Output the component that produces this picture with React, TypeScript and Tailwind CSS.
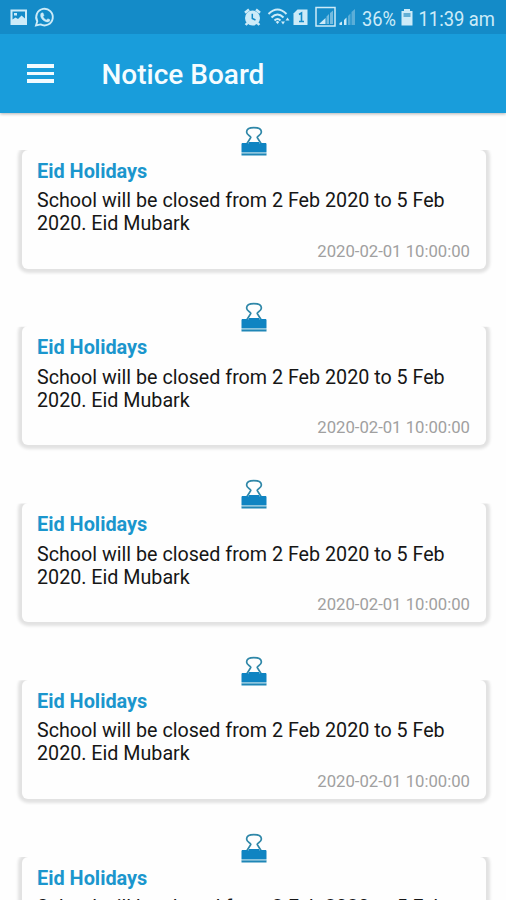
import React from "react";

const notices = [0, 1, 2, 3, 4].map((id) => ({
  id,
  title: "Eid Holidays",
  lines: ["School will be closed from 2 Feb 2020 to 5 Feb", "2020. Eid Mubark"],
  date: "2020-02-01 10:00:00",
}));

function BinderClip() {
  return (
    <svg width="26" height="31" viewBox="0 0 26 31" className="block" fill="none">
      <path
        d="M6 17.500L9.800 11.500C10 9.800 5.600 9.500 5.600 6C5.600 3 8 1.700 13 1.700S20.400 3 20.400 6C20.400 9.500 16 9.800 16.200 11.500L20 17.500"
        stroke="#2f87a8"
        strokeWidth="1.700"
      />
      <path d="M1 17H6.500L7.500 18H18.500L19.500 17H25L25.500 18V26H.5V18Z" fill="#0f84c2" />
      <path d="M8 16H18L19 18H7Z" fill="#0f84c2" />
      <path d="M.5 27.300H25.500V29.500H.5Z" fill="#1f86b6" />
      <path d="M.5 26H25.500V27.300H.5Z" fill="#8cc5de" />
    </svg>
  );
}

function StatusBar() {
  return (
    <div className="flex h-[34px] items-center bg-[#148bc8] text-[#cdebf8]">
      <svg width="506" height="34" viewBox="0 0 506 34" fill="none">
        <path fillRule="evenodd" d="M10.500 9.500H27V25H10.500ZM12.500 11.500V19.500L15.500 17.500L18 19L21.500 15.500L25 18.500V11.500ZM14 13H17V15.500H14Z" fill="#cdebf8" />
        <g stroke="#cdebf8">
          <path d="M36 25.500L37.300 21.200A8.300 8.300 0 1 1 40.600 24.400Z" strokeWidth="1.900" />
          <path d="M41 13.200L43 12.800L44 15.500L43 16.700C43.700 18.300 45 19.400 46.500 20L47.800 18.700L50 19.800C50 21.500 48.500 22.200 46.800 21.900C43 21.300 39.300 17 41 13.200Z" fill="#cdebf8" strokeWidth=".4" />
        </g>
        <circle cx="252.500" cy="18" r="7.500" fill="#cdebf8" />
        <path d="M245 12.700L249 9.500M256 9.500L260 12.700M247.500 23L245.700 25M257.500 23L259.300 25" stroke="#cdebf8" strokeWidth="2.600" />
        <path d="M252.300 13.800V18.500L255.500 20" stroke="#148bc8" strokeWidth="1.500" />
        <g stroke="#cdebf8" strokeWidth="2">
          <path d="M268.500 14Q277.500 5 286.500 14M271.500 17.500Q277.500 11.500 283.500 17.500M274.500 20.500Q277.500 17.500 280.500 20.500" />
        </g>
        <path d="M275.700 22L277.500 20.700L279.300 22L277.500 24Z" fill="#cdebf8" />
        <path d="M281 21.500L283 24.500L285 21.500ZM285.500 20.500L287.500 17.500L289.500 20.500Z" fill="#cdebf8" />
        <path d="M297.500 9.500H307.500V25H293.500V13.500Z" fill="#cdebf8" />
        <path d="M299 14.500L301.500 13V21.500M299 21.500H304" stroke="#148bc8" strokeWidth="1.600" />
        <rect x="316" y="7.500" width="19" height="18.500" stroke="#cdebf8" strokeWidth="1.500" />
        <path d="M319 24L325.500 18V24Z" fill="#cdebf8" />
        <path d="M326.500 24V16.500L329 14V24ZM330 24V13L333 10.500V24Z" fill="#73bbdf" />
        <path d="M339.500 25V23L342 21.500V25ZM344 25V20L346.500 17.500V25Z" fill="#cdebf8" />
        <path d="M348 25V16L350.500 13.500V25ZM351.500 25V12L355 9V25Z" fill="#5aaed8" />
        <text x="362" y="25.500" fill="#cdebf8" className="font-[Roboto,sans-serif] text-[20px]" textLength="34" lengthAdjust="spacingAndGlyphs">36%</text>
        <path d="M404 9H410V11H412.500V25.500H401.500V11H404Z" fill="#cdebf8" />
        <path d="M403.500 13H410.500V17H403.500Z" fill="#62afd5" />
        <text x="418.500" y="25.500" fill="#cdebf8" className="font-[Roboto,sans-serif] text-[20px]" textLength="76.500" lengthAdjust="spacingAndGlyphs">11:39 am</text>
      </svg>
    </div>
  );
}

export default function App() {
  return (
    <div className="h-[900px] w-[506px] overflow-hidden bg-[#fefefe] font-[Roboto,sans-serif]">
      <header className="relative h-[113px] bg-[#199ddb] shadow-[0_1px_3px_rgba(0,0,0,0.3)]">
        <StatusBar />
        <div className="flex h-[79px] items-center pl-[26.500px]">
          <div className="flex w-[27px] flex-col gap-[4px]">
            <span className="h-[3.500px] bg-[#f2fbff]" />
            <span className="h-[3.500px] bg-[#f2fbff]" />
            <span className="h-[3.500px] bg-[#f2fbff]" />
          </div>
          <h1 className="ml-[48px] mt-[3px] text-[28px] font-medium leading-8 text-[#f5fcff]">Notice Board</h1>
        </div>
      </header>
      <main>
        {notices.map((n) => (
          <article key={n.id} className="h-[176.750px] pt-[12.500px]">
            <div className="ml-[240.500px] h-[24px]">
              <BinderClip />
            </div>
            <div className="ml-[21.500px] h-[119px] w-[464.500px] rounded-[6px] shadow-[0_0_3px_4px_#e2e2e2] [clip-path:inset(0.600px_-7px_-7px_-7px)]">
              <div className="pl-[15.500px] pr-4 pt-[10.200px]">
                <h2 className="text-[19.900px] font-bold leading-[23px] text-[#1b96cd]">{n.title}</h2>
                <p className="mt-[6.500px] whitespace-nowrap text-[19.700px] leading-[23px] text-[#161616]">
                  {n.lines[0]}
                  <br />
                  {n.lines[1]}
                </p>
                <p className="mt-[6.500px] text-right text-[16.700px] leading-5 text-[#a0a0a0]">{n.date}</p>
              </div>
            </div>
          </article>
        ))}
      </main>
    </div>
  );
}
